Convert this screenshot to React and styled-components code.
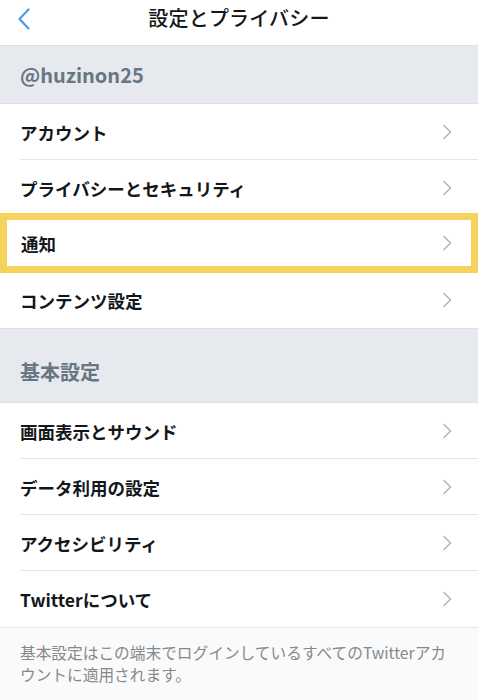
import React from 'react';
import styled, { createGlobalStyle } from 'styled-components';

const GlobalStyle = createGlobalStyle`
  html, body {
    margin: 0;
    padding: 0;
    background: #ffffff;
  }
  body {
    font-family: "Noto Sans CJK JP", "Noto Sans", sans-serif;
    -webkit-font-smoothing: antialiased;
  }
`;

const Screen = styled.div`
  width: 478px;
  min-height: 700px;
  background: #fafafa;
`;

const NavBar = styled.header`
  height: 46px;
  display: flex;
  align-items: center;
  justify-content: center;
  position: relative;
  background: #ffffff;
  border-bottom: 1px solid #dcdfe3;
  box-sizing: border-box;
`;

const BackButton = styled.button`
  position: absolute;
  left: 12px;
  top: 6px;
  width: 24px;
  height: 26px;
  padding: 0;
  border: none;
  background: none;
  display: flex;
  align-items: center;
  justify-content: center;
`;

const Title = styled.h1`
  margin: 0 0 10px;
  font-size: 20px;
  font-weight: 500;
  color: #14171a;
  letter-spacing: 0.2px;
`;

const SectionHead = styled.div`
  display: flex;
  align-items: ${({ tall }) => (tall ? 'flex-end' : 'center')};
  height: ${({ tall }) => (tall ? '75px' : '58px')};
  padding: ${({ tall }) => (tall ? '0 20px 16px' : '0 20px')};
  box-sizing: border-box;
  background: #e6e9ed;
  border-top: ${({ tall }) => (tall ? '1px solid #dde1e5' : 'none')};
  border-bottom: 1px solid #dde1e5;
  font-size: 20px;
  font-weight: 700;
  color: #687684;
`;

const List = styled.ul`
  list-style: none;
  margin: 0;
  padding: 0;
  background: #ffffff;
`;

const Row = styled.li`
  position: relative;
  display: flex;
  align-items: center;
  justify-content: space-between;
  height: 56px;
  padding: 0 26px 0 20px;
  box-sizing: border-box;
  font-size: 17.5px;
  font-weight: 700;
  color: #14171a;

  &::after {
    content: '';
    position: absolute;
    left: 20px;
    right: 0;
    bottom: 0;
    height: 1px;
    background: #e3e6e9;
  }

  &:last-child::after {
    display: none;
  }

  ${({ highlight }) =>
    highlight &&
    `
    z-index: 1;
    height: 60px;
    margin: -3px 0 -1px;
    padding: 0 19px 0 14px;
    border: 7px solid #f5d25c;
    background: #ffffff;
    &::after { display: none; }
  `}
`;

const Chevron = () => (
  <svg width="10" height="16" viewBox="0 0 10 16">
    <path d="M2 1.5 L8.5 8 L2 14.5" fill="none" stroke="#b3b6b9" strokeWidth="1.6" strokeLinecap="round" strokeLinejoin="round" />
  </svg>
);

const Note = styled.p`
  margin: 0;
  padding: 14px 24px 20px 20px;
  border-top: 1px solid #e3e6e9;
  font-size: 15.7px;
  line-height: 22px;
  font-weight: 400;
  color: #84898e;
`;

const accountItems = ['アカウント', 'プライバシーとセキュリティ', '通知', 'コンテンツ設定'];
const generalItems = ['画面表示とサウンド', 'データ利用の設定', 'アクセシビリティ', 'Twitterについて'];

function App() {
  return (
    <Screen>
      <GlobalStyle />
      <NavBar>
        <BackButton aria-label="戻る">
          <svg width="14" height="22" viewBox="0 0 14 22">
            <path d="M11.5 1.5 L2.5 11 L11.5 20.5" fill="none" stroke="#4a9de2" strokeWidth="2.2" strokeLinecap="round" strokeLinejoin="round" />
          </svg>
        </BackButton>
        <Title>設定とプライバシー</Title>
      </NavBar>

      <SectionHead>@huzinon25</SectionHead>
      <List>
        {accountItems.map((label) => (
          <Row key={label} highlight={label === '通知'}>
            {label}
            <Chevron />
          </Row>
        ))}
      </List>

      <SectionHead tall>基本設定</SectionHead>
      <List>
        {generalItems.map((label) => (
          <Row key={label}>
            {label}
            <Chevron />
          </Row>
        ))}
      </List>

      <Note>
        基本設定はこの端末でログインしているすべてのTwitterアカウントに適用されます。
      </Note>
    </Screen>
  );
}

export default App;
